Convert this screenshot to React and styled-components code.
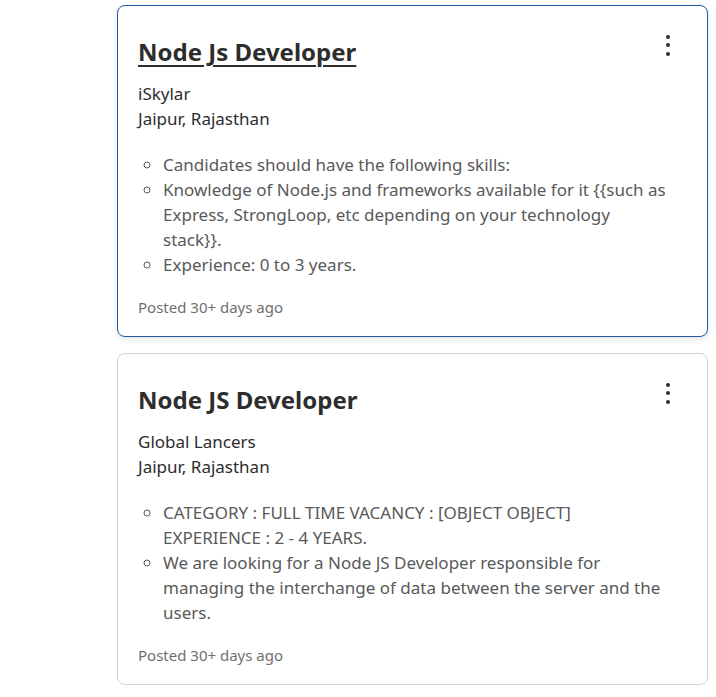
import styled, { createGlobalStyle } from "styled-components";

const GlobalStyle = createGlobalStyle`
  body {
    margin: 0;
    background: #ffffff;
    font-family: "Noto Sans", "Open Sans", Arial, sans-serif;
  }
`;

const Page = styled.div`
  padding: 5px 8px 10px 117px;
  display: flex;
  flex-direction: column;
  gap: 16px;
`;

const Card = styled.div`
  position: relative;
  width: 591px;
  box-sizing: border-box;
  border: 1px solid ${(p) => (p.active ? "#2557a7" : "#d4d2d0")};
  border-radius: 8px;
  padding: 31px 38px 19px 20px;
  background: #fff;
  box-shadow: ${(p) =>
    p.active ? "0 2px 6px rgba(0,0,0,0.12)" : "none"};
`;

const Title = styled.h2`
  margin: 0;
  font-size: 24px;
  line-height: 30px;
  font-weight: 700;
  color: #2d2d2d;
  text-decoration: ${(p) => (p.underline ? "underline" : "none")};
  text-decoration-thickness: 2px;
  text-underline-offset: 4px;
`;

const Company = styled.div`
  margin-top: 14px;
  font-size: 17px;
  line-height: 25px;
  color: #2d2d2d;
`;

const List = styled.ul`
  list-style: circle;
  margin: 21px 0 0 0;
  padding-left: 25px;
  font-size: 17px;
  line-height: 25px;
  color: #595959;
`;

const Posted = styled.div`
  margin-top: 20px;
  font-size: 15px;
  line-height: 20px;
  color: #6f6f6f;
`;

const MenuButton = styled.button`
  position: absolute;
  top: 21px;
  right: 24px;
  width: 30px;
  height: 36px;
  border: none;
  background: none;
  padding: 0;
  display: flex;
  flex-direction: column;
  align-items: center;
  justify-content: center;
  gap: 4.5px;
  cursor: pointer;
`;

const Dot = styled.span`
  width: 4px;
  height: 4px;
  border-radius: 50%;
  background: #2d2d2d;
`;

const jobs = [
  {
    title: "Node Js Developer",
    company: "iSkylar",
    location: "Jaipur, Rajasthan",
    points: [
      "Candidates should have the following skills:",
      "Knowledge of Node.js and frameworks available for it {{such as Express, StrongLoop, etc depending on your technology stack}}.",
      "Experience: 0 to 3 years.",
    ],
    active: true,
  },
  {
    title: "Node JS Developer",
    company: "Global Lancers",
    location: "Jaipur, Rajasthan",
    points: [
      "CATEGORY : FULL TIME VACANCY : [OBJECT OBJECT] EXPERIENCE : 2 - 4 YEARS.",
      "We are looking for a Node JS Developer responsible for managing the interchange of data between the server and the users.",
    ],
    active: false,
  },
];

export default function App() {
  return (
    <>
      <GlobalStyle />
      <Page>
        {jobs.map((job) => (
          <Card key={job.company} active={job.active}>
            <Title underline={job.active}>{job.title}</Title>
            <Company>
              {job.company}
              <br />
              {job.location}
            </Company>
            <List>
              {job.points.map((pt) => (
                <li key={pt}>{pt}</li>
              ))}
            </List>
            <Posted>Posted 30+ days ago</Posted>
            <MenuButton aria-label="More options">
              <Dot />
              <Dot />
              <Dot />
            </MenuButton>
          </Card>
        ))}
      </Page>
    </>
  );
}
